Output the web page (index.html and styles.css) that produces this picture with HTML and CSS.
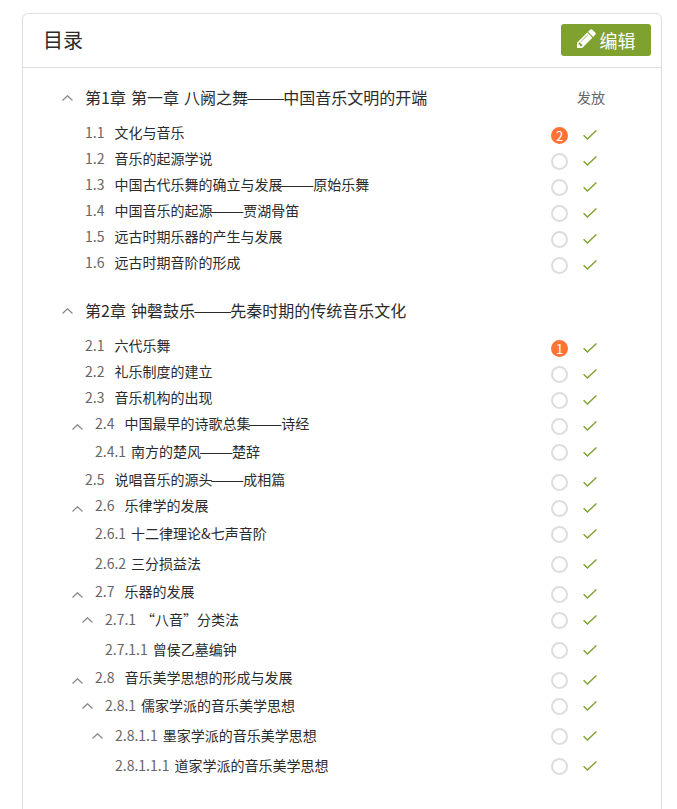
FILE: index.html
```html
<!DOCTYPE html>
<html lang="zh-CN">
<head>
    <meta charset="UTF-8">
    <title>目录</title>
    <link rel="stylesheet" href="styles.css">
</head>
<body>
    <svg class="icon-defs" width="0" height="0">
        <symbol id="caret" viewBox="0 0 11 6"><polyline points="0.5,5.5 5.5,0.7 10.5,5.5" fill="none" stroke="#888" stroke-width="1.2"/></symbol>
        <symbol id="check" viewBox="0 0 14 10"><polyline points="0.6,5.2 4.4,9 13.4,0.5" fill="none" stroke="#7fa12f" stroke-width="1.4"/></symbol>
    </svg>
    <div class="card">
        <div class="card-head">
            <h2>目录</h2>
            <a class="btn-edit">
                <svg viewBox="128 128 1540 1540" width="19" height="19"><path fill="#fff" d="M491 1536l91-91-235-235-91 91v107h128v128h107zm523-928q0-22-22-22-10 0-17 7l-542 542q-7 7-7 17 0 22 22 22 10 0 17-7l542-542q7-7 7-17zm-54-192l416 416-832 832h-416v-416zm683 96q0 53-37 90l-166 166-416-416 166-165q36-38 90-38 53 0 91 38l235 234q37 39 37 91z"/></svg>
                编辑
            </a>
        </div>
        <div class="card-body">
            <div class="chapter">
                <div class="chapter-head">
                    <svg class="caret"><use href="#caret"/></svg>
                    <h3>第1章 第一章 八阙之舞<span class="dash">——</span>中国音乐文明的开端</h3>
                    <span class="publish">发放</span>
                </div>
                <div class="row lv1"><span class="slot"></span><span class="num">1.1</span><span class="name">文化与音乐</span><span class="status"><i class="dot on">2</i><svg class="check"><use href="#check"/></svg></span></div>
                <div class="row lv1"><span class="slot"></span><span class="num">1.2</span><span class="name">音乐的起源学说</span><span class="status"><i class="dot"></i><svg class="check"><use href="#check"/></svg></span></div>
                <div class="row lv1"><span class="slot"></span><span class="num">1.3</span><span class="name">中国古代乐舞的确立与发展<span class="dash">——</span>原始乐舞</span><span class="status"><i class="dot"></i><svg class="check"><use href="#check"/></svg></span></div>
                <div class="row lv1"><span class="slot"></span><span class="num">1.4</span><span class="name">中国音乐的起源<span class="dash">——</span>贾湖骨笛</span><span class="status"><i class="dot"></i><svg class="check"><use href="#check"/></svg></span></div>
                <div class="row lv1"><span class="slot"></span><span class="num">1.5</span><span class="name">远古时期乐器的产生与发展</span><span class="status"><i class="dot"></i><svg class="check"><use href="#check"/></svg></span></div>
                <div class="row lv1"><span class="slot"></span><span class="num">1.6</span><span class="name">远古时期音阶的形成</span><span class="status"><i class="dot"></i><svg class="check"><use href="#check"/></svg></span></div>
            </div>
            <div class="chapter">
                <div class="chapter-head">
                    <svg class="caret"><use href="#caret"/></svg>
                    <h3>第2章 钟磬鼓乐<span class="dash">——</span>先秦时期的传统音乐文化</h3>
                </div>
                <div class="row lv1"><span class="slot"></span><span class="num">2.1</span><span class="name">六代乐舞</span><span class="status"><i class="dot on">1</i><svg class="check"><use href="#check"/></svg></span></div>
                <div class="row lv1"><span class="slot"></span><span class="num">2.2</span><span class="name">礼乐制度的建立</span><span class="status"><i class="dot"></i><svg class="check"><use href="#check"/></svg></span></div>
                <div class="row lv1"><span class="slot"></span><span class="num">2.3</span><span class="name">音乐机构的出现</span><span class="status"><i class="dot"></i><svg class="check"><use href="#check"/></svg></span></div>
                <div class="row lv2"><span class="slot"><svg class="caret"><use href="#caret"/></svg></span><span class="num">2.4</span><span class="name">中国最早的诗歌总集<span class="dash">——</span>诗经</span><span class="status"><i class="dot"></i><svg class="check"><use href="#check"/></svg></span></div>
                <div class="row tall lv2"><span class="slot"></span><span class="num sub">2.4.1</span><span class="name">南方的楚风<span class="dash">——</span>楚辞</span><span class="status"><i class="dot"></i><svg class="check"><use href="#check"/></svg></span></div>
                <div class="row lv1"><span class="slot"></span><span class="num">2.5</span><span class="name">说唱音乐的源头<span class="dash">——</span>成相篇</span><span class="status"><i class="dot"></i><svg class="check"><use href="#check"/></svg></span></div>
                <div class="row lv2"><span class="slot"><svg class="caret"><use href="#caret"/></svg></span><span class="num">2.6</span><span class="name">乐律学的发展</span><span class="status"><i class="dot"></i><svg class="check"><use href="#check"/></svg></span></div>
                <div class="row tall lv2"><span class="slot"></span><span class="num sub">2.6.1</span><span class="name">十二律理论&amp;七声音阶</span><span class="status"><i class="dot"></i><svg class="check"><use href="#check"/></svg></span></div>
                <div class="row tall lv2"><span class="slot"></span><span class="num sub">2.6.2</span><span class="name">三分损益法</span><span class="status"><i class="dot"></i><svg class="check"><use href="#check"/></svg></span></div>
                <div class="row lv2"><span class="slot"><svg class="caret"><use href="#caret"/></svg></span><span class="num">2.7</span><span class="name">乐器的发展</span><span class="status"><i class="dot"></i><svg class="check"><use href="#check"/></svg></span></div>
                <div class="row tall lv3"><span class="slot"><svg class="caret"><use href="#caret"/></svg></span><span class="num sub">2.7.1</span><span class="name">“八音”分类法</span><span class="status"><i class="dot"></i><svg class="check"><use href="#check"/></svg></span></div>
                <div class="row tall lv3"><span class="slot"></span><span class="num sub">2.7.1.1</span><span class="name">曾侯乙墓编钟</span><span class="status"><i class="dot"></i><svg class="check"><use href="#check"/></svg></span></div>
                <div class="row lv2"><span class="slot"><svg class="caret"><use href="#caret"/></svg></span><span class="num">2.8</span><span class="name">音乐美学思想的形成与发展</span><span class="status"><i class="dot"></i><svg class="check"><use href="#check"/></svg></span></div>
                <div class="row tall lv3"><span class="slot"><svg class="caret"><use href="#caret"/></svg></span><span class="num sub">2.8.1</span><span class="name">儒家学派的音乐美学思想</span><span class="status"><i class="dot"></i><svg class="check"><use href="#check"/></svg></span></div>
                <div class="row tall lv4"><span class="slot"><svg class="caret"><use href="#caret"/></svg></span><span class="num sub">2.8.1.1</span><span class="name">墨家学派的音乐美学思想</span><span class="status"><i class="dot"></i><svg class="check"><use href="#check"/></svg></span></div>
                <div class="row tall lv4"><span class="slot"></span><span class="num sub">2.8.1.1.1</span><span class="name">道家学派的音乐美学思想</span><span class="status"><i class="dot"></i><svg class="check"><use href="#check"/></svg></span></div>
            </div>
        </div>
    </div>
</body>
</html>
```

FILE: styles.css
```css
html, body {
    margin: 0;
    height: 100%;
    overflow: hidden;
}
body {
    padding: 13px 15px 0 22px;
    box-sizing: border-box;
    background: #fff;
    color: #2b2b2b;
    font-family: "Noto Sans CJK SC", "Open Sans", sans-serif;
}
.icon-defs {
    position: absolute;
}
.card {
    border: 1px solid #ddd;
    border-radius: 6px;
    min-height: 830px;
}
.card-head {
    height: 53px;
    border-bottom: 1px solid #ddd;
    display: flex;
    align-items: center;
    justify-content: space-between;
    padding: 0 10px 0 20px;
}
.card-head h2 {
    margin: -2px 0 0;
    font-size: 20px;
    font-weight: normal;
    line-height: 54px;
}
.btn-edit {
    width: 90px;
    height: 32px;
    margin-top: -2px;
    background: #7fa12f;
    border-radius: 3px;
    color: #fff;
    font-size: 18px;
    line-height: 32px;
    display: flex;
    align-items: center;
    justify-content: center;
    gap: 4px;
}
.btn-edit svg {
    margin-top: -3px;
}
.card-body {
    padding-top: 7px;
}
.chapter {
    margin-bottom: 11px;
}
.chapter-head {
    height: 46px;
    display: flex;
    align-items: center;
    padding-left: 39px;
}
.chapter-head h3 {
    margin: -2px 0 0;
    font-size: 16px;
    font-weight: normal;
    line-height: 46px;
    word-spacing: 1.5px;
    flex: 1;
}
.chapter-head .caret {
    margin-right: 12px;
}
.dash {
    display: inline-block;
    width: 2.2em;
    text-align: center;
    transform: scaleX(1.45);
}
.publish {
    width: 84px;
    margin-top: -2px;
    font-size: 14px;
    color: #666;
}
.caret {
    width: 11px;
    height: 6px;
    display: block;
    flex: none;
}
.row {
    height: 26px;
    display: flex;
    font-size: 14px;
    line-height: 22px;
}
.row.tall {
    height: 30px;
    line-height: 26px;
}
.lv1 { padding-left: 39px; }
.lv2 { padding-left: 49px; }
.lv3 { padding-left: 59px; }
.lv4 { padding-left: 69px; }
.slot {
    width: 23px;
    flex: none;
    padding-top: 12px;
    box-sizing: border-box;
}
.tall .slot {
    padding-top: 11px;
}
.num {
    color: #666;
    margin-right: 10px;
}
.num.sub {
    margin-right: 5px;
}
.name {
    flex: 1;
    white-space: nowrap;
}
.status {
    width: 110px;
    height: 26px;
    flex: none;
    display: flex;
    align-items: center;
}
.dot {
    width: 17px;
    height: 17px;
    margin: 2px 15px 0 0;
    box-sizing: border-box;
    border: 2px solid #ddd;
    border-radius: 50%;
    font-style: normal;
    font-size: 13px;
    line-height: 13px;
    text-align: center;
}
.dot.on {
    background: #ff7335;
    border-color: #ff7335;
    color: #fff;
}
.check {
    width: 14px;
    height: 10px;
    display: block;
    margin-top: 2px;
}
```
